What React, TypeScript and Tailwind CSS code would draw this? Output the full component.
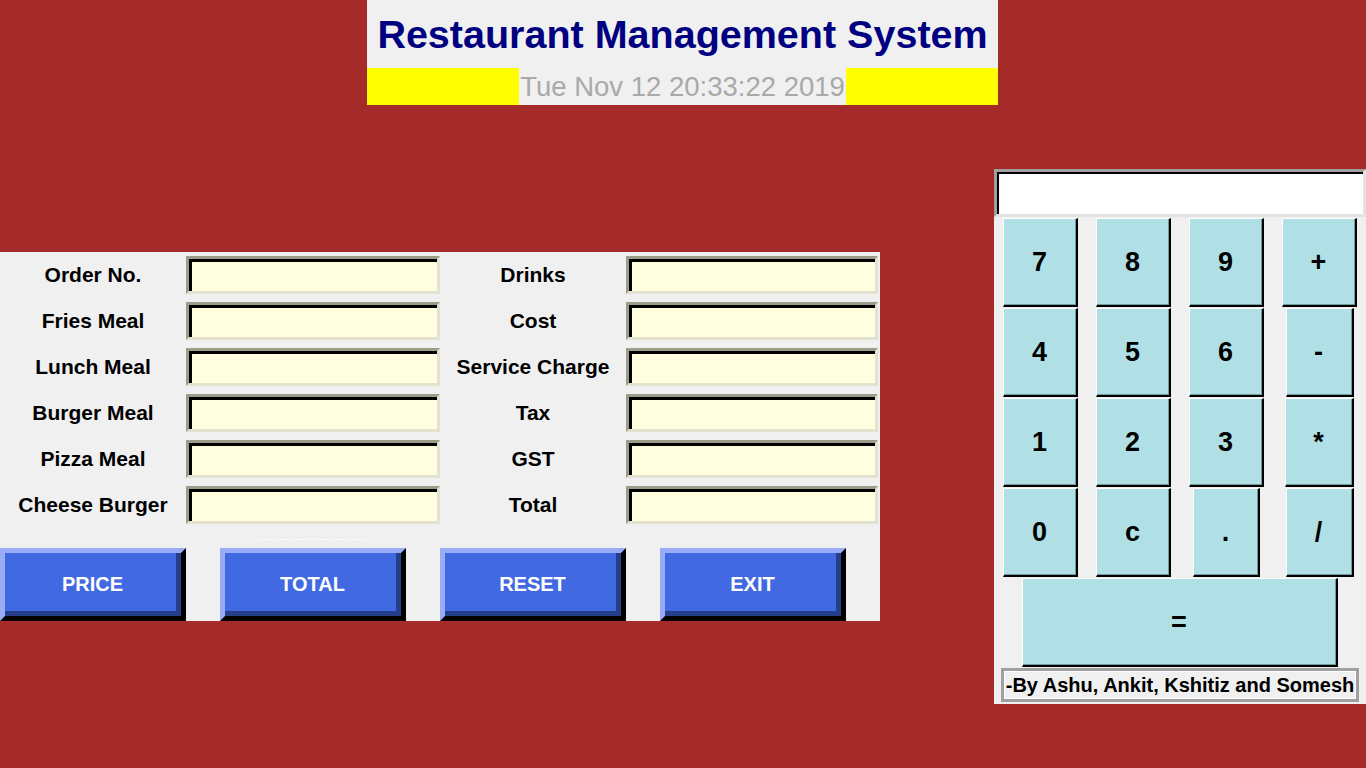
const leftRows = ['Order No.', 'Fries Meal', 'Lunch Meal', 'Burger Meal', 'Pizza Meal', 'Cheese Burger'];
const rightRows = ['Drinks', 'Cost', 'Service Charge', 'Tax', 'GST', 'Total'];

const calcRows: { label: string; w: string }[][] = [
  [
    { label: '7', w: 'w-[75px]' },
    { label: '8', w: 'w-[75px]' },
    { label: '9', w: 'w-[75px]' },
    { label: '+', w: 'w-[75px]' },
  ],
  [
    { label: '4', w: 'w-[75px]' },
    { label: '5', w: 'w-[75px]' },
    { label: '6', w: 'w-[75px]' },
    { label: '-', w: 'w-[68px]' },
  ],
  [
    { label: '1', w: 'w-[75px]' },
    { label: '2', w: 'w-[75px]' },
    { label: '3', w: 'w-[75px]' },
    { label: '*', w: 'w-[69px]' },
  ],
  [
    { label: '0', w: 'w-[75px]' },
    { label: 'c', w: 'w-[75px]' },
    { label: '.', w: 'w-[67px]' },
    { label: '/', w: 'w-[68px]' },
  ],
];

// sunken tk entry
const Field = ({ width }: { width: string }) => (
  <div className={`${width} h-[38px] border-[3px] border-t-[#9c9c8a] border-l-[#9c9c8a] border-b-[#e2e2cf] border-r-[#e2e2cf]`}>
    <div className="h-full w-full border-t-[3px] border-l-[3px] border-black bg-[#ffffe0]" />
  </div>
);

// raised royalblue button
const ActionButton = ({ label }: { label: string }) => (
  <div className="w-[186px] h-[73px] border-[5px] border-t-[#9aabf8] border-l-[#9aabf8] border-b-black border-r-black">
    <div className="h-full w-full border-b-[5px] border-r-[5px] border-[#263f8b] bg-[#4169e1] flex items-center justify-center pt-1 pl-1 text-white font-bold text-[20px]">
      {label}
    </div>
  </div>
);

const CalcKey = ({ label, w }: { label: string; w: string }) => (
  <div className={`${w} h-[89px] border-t border-l border-white border-b-2 border-r-2 border-b-black border-r-black`}>
    <div className="h-full w-full border-b border-r border-[#6f9ba0] bg-[#b0e0e6] flex items-center justify-center pt-[2px] text-black font-bold text-[27px]">
      {label}
    </div>
  </div>
);

export default function App() {
  return (
    <div className="w-full h-[768px] bg-[#a52a2a] font-['Liberation_Sans',Arial,sans-serif] overflow-hidden">
      {/* Header */}
      <div className="ml-[367px] w-[631px] h-[105px] bg-[#f0f0f0] flex flex-col">
        <div className="h-[68px] leading-[68px] text-center text-[39.5px] font-bold text-[#000080]">
          Restaurant Management System
        </div>
        <div className="flex h-[37px]">
          <div className="w-[152px] bg-[#ffff00]" />
          <div className="flex-1 text-center text-[27.5px] leading-[38px] text-[#a9a9a9]">
            Tue Nov 12 20:33:22 2019
          </div>
          <div className="w-[152px] bg-[#ffff00]" />
        </div>
      </div>

      <div className="flex justify-between items-start">
        {/* Order form */}
        <div className="mt-[147px] w-[880px] h-[369px] bg-[#f0f0f0] pt-[4px]">
          <div className="flex flex-col gap-[8px]">
            {leftRows.map((l, i) => (
              <div key={l} className="grid grid-cols-[186px_254px_186px_252px] items-center h-[38px]">
                <div className="text-center font-bold text-[21px] text-black">{l}</div>
                <Field width="w-[254px]" />
                <div className="text-center font-bold text-[21px] text-black">{rightRows[i]}</div>
                <Field width="w-[252px]" />
              </div>
            ))}
          </div>
          <div className="ml-[260px] mt-[15px] w-[104px] border-t border-dashed border-white" />
          <div className="mt-[8px] flex gap-[34px]">
            {['PRICE', 'TOTAL', 'RESET', 'EXIT'].map((b) => (
              <ActionButton key={b} label={b} />
            ))}
          </div>
        </div>

        {/* Calculator */}
        <div className="mt-[64px] w-[372px] bg-[#f0f0f0] pb-[2px]">
          <div className="h-[48px] border-[3px] border-t-[#a0a0a0] border-l-[#a0a0a0] border-b-[#e3e3e3] border-r-[#e3e3e3]">
            <div className="h-full w-full border-t-2 border-l-2 border-black bg-white" />
          </div>
          <div className="mt-[1px] flex flex-col">
            {calcRows.map((row, i) => (
              <div key={i} className="grid grid-cols-4 h-[90px]">
                {row.map((k) => (
                  <div key={k.label} className="flex justify-center">
                    <CalcKey label={k.label} w={k.w} />
                  </div>
                ))}
              </div>
            ))}
            <div className="flex justify-center h-[90px]">
              <CalcKey label="=" w="w-[316px]" />
            </div>
          </div>
          <div className="mx-auto w-[358px] h-[34px] border-[3px] border-[#a0a0a0]">
            <div className="h-full w-full border border-white flex items-center justify-center font-bold text-[20px] text-black whitespace-nowrap">
              -By Ashu, Ankit, Kshitiz and Somesh
            </div>
          </div>
        </div>
      </div>
    </div>
  );
}
